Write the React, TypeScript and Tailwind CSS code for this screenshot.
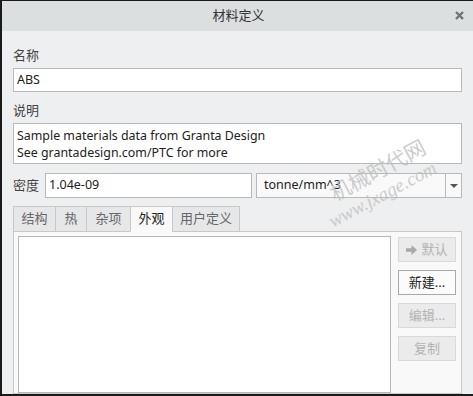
const font = { fontFamily: '"Noto Sans", "Noto Sans CJK SC", sans-serif' };

function CloseIcon() {
  return (
    <svg width="9" height="9" viewBox="0 0 9 9">
      <path d="M1 1L8 8M8 1L1 8" stroke="#737373" strokeWidth="2.4" />
    </svg>
  );
}

function ArrowIcon() {
  return (
    <svg width="11" height="10" viewBox="0 0 11 10">
      <path d="M0 3.2H5.5V0L11 5L5.5 10V6.8H0Z" fill="#a9a9a9" />
    </svg>
  );
}

const tabs = ["结构", "热", "杂项", "外观", "用户定义"];
const tabWidths = ["w-[43px]", "w-[32px]", "w-[45px]", "w-[43px]", "w-[68px]"];

function SideButton({ label, enabled, icon }: { label: string; enabled?: boolean; icon?: boolean }) {
  return (
    <div
      className={
        "h-[25px] w-[58px] flex items-center justify-center gap-1 border text-[13px] " +
        (enabled ? "border-[#a8a8a8] bg-[#fbfbfb] text-[#222]" : "border-[#d9d9d9] bg-[#ebebeb] text-[#b3b3b3]")
      }
    >
      {icon && <ArrowIcon />}
      <span>{label}</span>
    </div>
  );
}

export default function App() {
  return (
    <div
      style={font}
      className="relative w-[473px] h-[396px] overflow-hidden bg-[#eeeff0] border-t border-l-2 border-b-2 border-[#1a1a1a] flex flex-col text-[13px] text-[#333]"
    >
      <div className="h-[30px] shrink-0 bg-[#dcdfe0] flex items-center relative">
        <div className="flex-1 text-center text-[13px] text-[#333] pl-[2px]">材料定义</div>
        <div className="absolute right-[9px] top-[10px]">
          <CloseIcon />
        </div>
      </div>

      <div className="flex flex-col px-[11px] pt-[16px] flex-1 min-h-0">
        <div className="leading-[17px] text-[#444]">名称</div>
        <div className="mt-[4px] h-[24px] border border-[#b8b8b8] bg-white flex items-center px-[3px] text-[12.5px] text-[#222]">
          ABS
        </div>

        <div className="mt-[10px] leading-[17px] text-[#444]">说明</div>
        <div className="mt-[4px] h-[41px] border border-[#b8b8b8] bg-white px-[3px] pt-[3px] leading-[17px] text-[12.4px] text-[#222]">
          <div>Sample materials data from Granta Design</div>
          <div>See grantadesign.com/PTC for more</div>
        </div>

        <div className="mt-[9px] flex items-center h-[25px]">
          <div className="w-[32px] text-[#444]">密度</div>
          <div className="w-[207px] h-full border border-[#b8b8b8] bg-white flex items-center px-[3px] text-[12.5px] text-[#222]">
            1.04e-09
          </div>
          <div className="ml-[4px] flex-1 h-full border border-[#b8b8b8] bg-[#f9f9f9] flex items-center">
            <div className="flex-1 px-[7px] text-[12.5px] text-[#222]">tonne/mm^3</div>
            <div className="w-[16px] h-full border-l border-[#b8b8b8] flex items-center justify-center">
              <svg width="8" height="4" viewBox="0 0 8 4">
                <path d="M0 0H8L4 4Z" fill="#555" />
              </svg>
            </div>
          </div>
        </div>

        <div className="mt-[8px] flex h-[26px] relative z-10">
          {tabs.map((t, i) => (
            <div
              key={t}
              className={
                tabWidths[i] +
                " h-full flex items-center justify-center border border-[#c8c8c8] -ml-px first:ml-0 " +
                (i === 3 ? "bg-[#f9f9f9] border-b-[#f9f9f9] text-[#222]" : "bg-[#e6e7e8] text-[#666]")
              }
            >
              {t}
            </div>
          ))}
        </div>

        <div className="-mt-px flex-1 min-h-0 border border-[#c8c8c8] bg-[#f9f9f9] flex gap-[7px] pl-[4px] pr-[4px] pt-[4px]">
          <div className="w-[373px] border border-[#b8b8b8] bg-white" />
          <div className="flex flex-col gap-[8px] pt-[1px]">
            <SideButton label="默认" icon />
            <SideButton label="新建..." enabled />
            <SideButton label="编辑..." />
            <SideButton label="复制" />
          </div>
        </div>
      </div>

      <div
        className="absolute left-[326px] top-[186px] pointer-events-none text-[#bdbdbd] opacity-75 rotate-[-28deg] origin-left"
        style={{ fontFamily: '"Liberation Serif", "Noto Sans CJK SC", serif' }}
      >
        <div className="text-[21px] leading-[24px] pl-[10px]">机械时代网</div>
        <div className="text-[19px] leading-[22px] italic -ml-[4px]">www.jxage.com</div>
      </div>
    </div>
  );
}
